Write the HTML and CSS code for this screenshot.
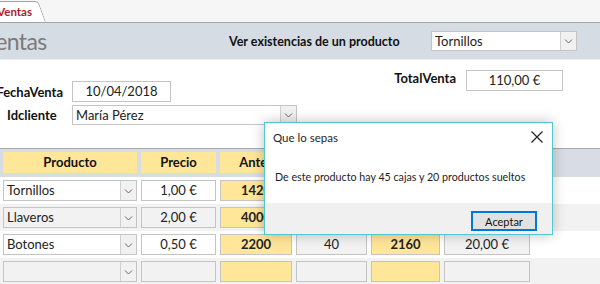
FILE: index.html
```html
<!DOCTYPE html>
<html lang="es">
<head>
    <meta charset="UTF-8">
    <title>Ventas</title>
    <link rel="stylesheet" href="styles.css">
</head>
<body>

    <!-- Pestaña del formulario -->
    <div class="tabs">
        <div class="tab"><span class="tab-text">Ventas</span></div>
    </div>

    <div class="form">
        <!-- Encabezado -->
        <div class="form-header">
            <div class="form-title">Ventas</div>
            <div class="header-label">Ver existencias de un producto</div>
            <div class="combo header-combo">
                <span class="combo-text">Tornillos</span>
                <span class="combo-btn"><svg width="9" height="6" viewBox="0 0 9 6"><path d="M1 1.5l3.5 3.5 3.5-3.5" fill="none" stroke="#666" stroke-width="1"/></svg></span>
            </div>
        </div>

        <!-- Datos de la venta -->
        <div class="detail">
            <div class="fields">
                <div class="field-row">
                    <div class="label label-fecha">FechaVenta</div>
                    <div class="box box-fecha">10/04/2018</div>
                </div>
                <div class="field-row">
                    <div class="label label-cliente">Idcliente</div>
                    <div class="combo combo-cliente">
                        <span class="combo-text">María Pérez</span>
                        <span class="combo-btn"><svg width="9" height="6" viewBox="0 0 9 6"><path d="M1 1.5l3.5 3.5 3.5-3.5" fill="none" stroke="#666" stroke-width="1"/></svg></span>
                    </div>
                </div>
            </div>
            <div class="total">
                <div class="label">TotalVenta</div>
                <div class="box box-total">110,00 €</div>
            </div>
        </div>

        <!-- Subformulario de líneas -->
        <div class="grid-head">
            <div class="head-cell">Producto</div>
            <div class="head-cell">Precio</div>
            <div class="head-cell">Antes</div>
            <div class="head-cell">Vendidos</div>
            <div class="head-cell">Después</div>
            <div class="head-cell">Subtotal</div>
        </div>

        <div class="grid-row">
            <div class="combo cell-combo"><span class="combo-text">Tornillos</span><span class="combo-btn"><svg width="9" height="6" viewBox="0 0 9 6"><path d="M1 1.5l3.5 3.5 3.5-3.5" fill="none" stroke="#666" stroke-width="1"/></svg></span></div>
            <div class="cell">1,00 €</div>
            <div class="cell cell-yellow">1420</div>
            <div class="cell cell-calc">20</div>
            <div class="cell cell-yellow">1400</div>
            <div class="cell cell-calc">20,00 €</div>
        </div>
        <div class="grid-row row-alt">
            <div class="combo cell-combo"><span class="combo-text">Llaveros</span><span class="combo-btn"><svg width="9" height="6" viewBox="0 0 9 6"><path d="M1 1.5l3.5 3.5 3.5-3.5" fill="none" stroke="#666" stroke-width="1"/></svg></span></div>
            <div class="cell">2,00 €</div>
            <div class="cell cell-yellow">4000</div>
            <div class="cell cell-calc">35</div>
            <div class="cell cell-yellow">3965</div>
            <div class="cell cell-calc">70,00 €</div>
        </div>
        <div class="grid-row">
            <div class="combo cell-combo"><span class="combo-text">Botones</span><span class="combo-btn"><svg width="9" height="6" viewBox="0 0 9 6"><path d="M1 1.5l3.5 3.5 3.5-3.5" fill="none" stroke="#666" stroke-width="1"/></svg></span></div>
            <div class="cell">0,50 €</div>
            <div class="cell cell-yellow">2200</div>
            <div class="cell cell-calc">40</div>
            <div class="cell cell-yellow">2160</div>
            <div class="cell cell-calc">20,00 €</div>
        </div>
        <div class="grid-row row-alt">
            <div class="combo cell-combo"><span class="combo-text"></span><span class="combo-btn"><svg width="9" height="6" viewBox="0 0 9 6"><path d="M1 1.5l3.5 3.5 3.5-3.5" fill="none" stroke="#666" stroke-width="1"/></svg></span></div>
            <div class="cell"></div>
            <div class="cell cell-yellow"></div>
            <div class="cell cell-calc"></div>
            <div class="cell cell-yellow"></div>
            <div class="cell cell-calc"></div>
        </div>
    </div>

    <!-- Cuadro de mensaje -->
    <div class="dialog">
        <div class="dialog-title">
            <span>Que lo sepas</span>
            <svg class="dialog-close" width="12" height="12" viewBox="0 0 12 12"><path d="M0.5 0.5l11 11M11.5 0.5l-11 11" stroke="#222" stroke-width="1.2"/></svg>
        </div>
        <div class="dialog-body">De este producto hay 45 cajas y 20 productos sueltos</div>
        <div class="dialog-footer">
            <button class="dialog-btn">Aceptar</button>
        </div>
    </div>

</body>
</html>
```

FILE: styles.css
```css
/* Estilos generales */
body {
    margin: 0;
    width: 600px;
    height: 284px;
    overflow: hidden;
    background-color: #fff;
    font-family: 'Lato', 'Liberation Sans', sans-serif;
    font-size: 13px;
    color: #222;
    position: relative;
}

/* Pestaña */
.tabs {
    height: 22px;
    background-color: #f6f6f6;
    border-bottom: 1px solid #a5a5a5;
    overflow: hidden;
}

.tab {
    display: inline-block;
    height: 21px;
    margin-top: 1px;
    margin-left: -12px;
    padding: 0 9px 0 12px;
    background-color: #fff;
    border: 1px solid #a5a5a5;
    border-bottom: none;
    border-radius: 0 4px 0 0;
    box-sizing: border-box;
    transform: skewX(20deg);
    transform-origin: bottom left;
}

.tab-text {
    display: inline-block;
    transform: skewX(-20deg);
    font-size: 11.5px;
    font-weight: bold;
    color: #b01c1c;
    line-height: 19px;
}

/* Encabezado del formulario */
.form-header {
    height: 36px;
    background-color: #d6dce4;
    display: flex;
    align-items: center;
    overflow: hidden;
}

.form-title {
    flex: 0 0 247px;
    margin-left: -18px;
    font-size: 23px;
    color: #7b7b7b;
    letter-spacing: -0.6px;
    white-space: nowrap;
}

.header-label {
    flex: 0 0 202px;
    font-weight: bold;
    font-size: 12.5px;
    color: #111;
}

/* Cuadros combinados */
.combo {
    display: flex;
    height: 20px;
    background-color: #fff;
    border: 1px solid #c4c4c4;
    box-sizing: border-box;
}

.combo-text {
    flex: 1;
    padding-left: 3px;
    line-height: 18px;
    white-space: nowrap;
    overflow: hidden;
}

.combo-btn {
    width: 15px;
    border-left: 1px solid #d0d0d0;
    background-color: #f1f1f1;
    display: flex;
    align-items: center;
    justify-content: center;
}

.header-combo {
    width: 146px;
}

/* Datos de la venta */
.detail {
    height: 88px;
    border-top: 1px solid #efefef;
    display: flex;
}

.fields {
    padding-top: 21px;
    display: flex;
    flex-direction: column;
    gap: 3px;
}

.field-row {
    display: flex;
    align-items: center;
}

.label {
    font-weight: bold;
    white-space: nowrap;
    color: #111;
}

.label-fecha {
    width: 63px;
    margin-right: 9px;
    display: flex;
    justify-content: flex-end;
}

.label-cliente {
    width: 65px;
    padding-left: 7px;
}

.box {
    height: 21px;
    border: 1px solid #c4c4c4;
    box-sizing: border-box;
    text-align: center;
    line-height: 19px;
}

.box-fecha {
    width: 99px;
}

.combo-cliente {
    width: 225px;
}

.total {
    margin-left: auto;
    margin-right: 37px;
    padding-top: 10px;
    display: flex;
    align-items: flex-start;
    gap: 10px;
}

.total .label {
    line-height: 16px;
}

.box-total {
    width: 97px;
}

/* Subformulario */
.grid-head,
.grid-row {
    display: grid;
    grid-template-columns: 134px 75px 72px 71px 69px 86px;
    column-gap: 4px;
    padding: 3px 0 3px 3px;
}

.grid-head {
    background-color: #d8dde5;
    border-top: 1px solid #a9a9a9;
    padding-bottom: 4px;
}

.head-cell {
    height: 21px;
    background-color: #ffe699;
    font-weight: bold;
    text-align: center;
    line-height: 21px;
    color: #111;
}

.grid-row {
    background-color: #fff;
}

.grid-row.row-alt {
    background-color: #f2f2f2;
}

.cell {
    height: 21px;
    border: 1px solid #c4c4c4;
    box-sizing: border-box;
    text-align: center;
    line-height: 19px;
    background-color: transparent;
}

.cell-combo {
    height: 21px;
    background-color: transparent;
}

.cell-combo .combo-text {
    line-height: 19px;
}

.cell-yellow {
    background-color: #ffe699;
    font-weight: bold;
}

.cell-calc {
    background-color: #f2f2f2;
}

/* Cuadro de mensaje */
.dialog {
    position: absolute;
    left: 264px;
    top: 122px;
    width: 289px;
    height: 113px;
    border: 1px solid #4fc8d0;
    box-sizing: border-box;
    background-color: #fff;
    box-shadow: 0 0 12px rgba(0, 0, 0, 0.25);
    display: flex;
    flex-direction: column;
    font-size: 10.7px;
    color: #1e1e1e;
}

.dialog-title {
    height: 28px;
    padding: 0 9px 0 8px;
    display: flex;
    align-items: center;
    justify-content: space-between;
    font-size: 11.5px;
}

.dialog-body {
    flex: 1;
    padding: 19px 0 0 10px;
}

.dialog-footer {
    height: 31px;
    background-color: #f0f0f0;
    display: flex;
    justify-content: flex-end;
    align-items: flex-start;
    padding: 8px 15px 0 0;
    box-sizing: border-box;
}

.dialog-btn {
    width: 66px;
    height: 20px;
    padding: 0;
    border: 2px solid #0078d7;
    background-color: #e1e1e1;
    font-family: 'Lato', 'Liberation Sans', sans-serif;
    font-size: 11px;
    color: #111;
}
```
